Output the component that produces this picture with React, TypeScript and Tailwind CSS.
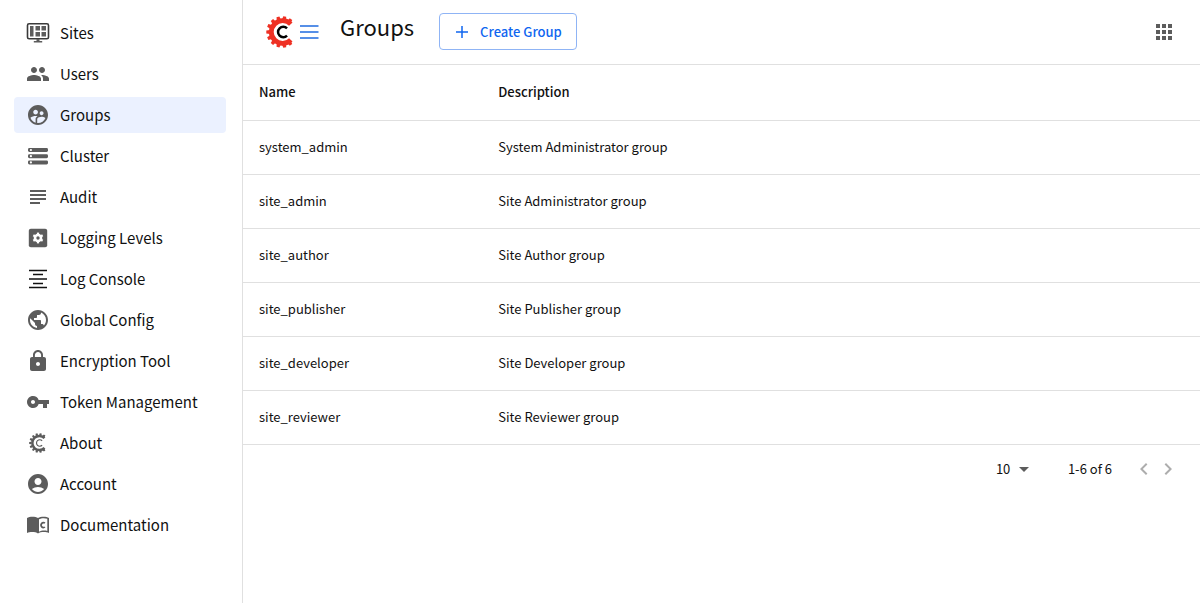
import type { ReactNode } from 'react';
import {
  MdAccountCircle,
  MdApps,
  MdArrowDropDown,
  MdChevronLeft,
  MdChevronRight,
  MdLock,
  MdPeople,
  MdPublic,
  MdSubject,
  MdSupervisedUserCircle,
  MdVpnKey,
} from 'react-icons/md';

const toothAngles = [-125, -100, -75, -50, -25, 0, 25, 50, 75, 100, 125];
const cogAngles = [0, 60, 120, 180, 240, 300];

type GearLogoProps = { className: string; cColor: string; ring: number; stroke: number };

function GearLogo({ className, cColor, ring, stroke }: GearLogoProps) {
  return (
    <svg viewBox="0 0 32 32" className={className} fill="none" aria-hidden="true">
      <path d="M24.8 8.2A11.3 11.3 0 1 0 24.8 23.8" stroke="currentColor" strokeWidth={ring} />
      {toothAngles.map((a) => (
        <path key={a} d="M4 13.9 0.3 14.5V17.5L4 18.1Z" fill="currentColor" transform={`rotate(${a} 16 16)`} />
      ))}
      <path d="M21 12.4A5.2 5.2 0 1 0 21 19.6" stroke={cColor} strokeWidth={stroke} />
    </svg>
  );
}

function SitesIcon() {
  return (
    <svg viewBox="0 0 24 24" className="size-6" fill="none" aria-hidden="true">
      <rect x="1.5" y="2.8" width="21" height="15" rx="1.6" stroke="#3a3a3a" strokeWidth="1.6" />
      <path d="M4 5h3.5v10.500H4zM9.500 5H14v4.500H9.500zM15.500 5H20v4.500h-4.500zM9.500 11H14v4.500H9.500zM15.500 11H20v4.500h-4.500z" fill="currentColor" />
      <path d="M10.5 18h3v2h2.7v1.600H7.800V20h2.700z" fill="currentColor" />
    </svg>
  );
}

function ClusterIcon() {
  return (
    <svg viewBox="0 0 24 24" className="size-6" aria-hidden="true">
      {[4, 10.2, 16.4].map((y) => (
        <g key={y}>
          <rect x="2" y={y} width="20" height="4" rx="1.4" fill="currentColor" />
          <circle cx="4.9" cy={y + 2} r="1.1" fill="#fff" />
        </g>
      ))}
    </svg>
  );
}

function LoggingIcon() {
  return (
    <svg viewBox="0 0 24 24" className="size-6" aria-hidden="true">
      <rect x="2.8" y="2.8" width="18.4" height="18.4" rx="2" fill="currentColor" />
      <circle cx="12" cy="12" r="3" fill="none" stroke="#fff" strokeWidth="2.6" />
      {cogAngles.map((a) => (
        <rect key={a} x="10.900" y="6.6" width="2.2" height="2.4" fill="#fff" transform={`rotate(${a} 12 12)`} />
      ))}
    </svg>
  );
}

function ConsoleIcon() {
  return (
    <svg viewBox="0 0 24 24" className="size-6 text-[#111]" aria-hidden="true">
      <path d="M3 3.500h18M7 7.500h10M3 12h18M7 16.500h10M3 20.500h18" stroke="currentColor" strokeWidth="1.600" />
    </svg>
  );
}

function DocsIcon() {
  return (
    <svg viewBox="0 0 24 24" className="size-6" fill="none" aria-hidden="true">
      <path d="M12 5C9.5 3.600 4 3.300 1 5v15c3-1.400 8.500-1.300 11 .5 2.500-1.800 8-1.900 11-.5V5c-3-1.700-8.500-1.400-11 0Zm9.300 13c-2.500-.8-6.300-.4-8.300.8V6.300c2-1.200 5.800-1.500 8.300-.5Z" fill="currentColor" fillRule="evenodd" />
      <path d="M18.900 10.200A2.300 2.500 0 1 0 18.900 14" stroke="currentColor" strokeWidth="1.700" />
    </svg>
  );
}

const icon = 'size-6';

const navItems: { label: string; icon: ReactNode }[] = [
  { label: 'Sites', icon: <SitesIcon /> },
  { label: 'Users', icon: <MdPeople className={icon} /> },
  { label: 'Groups', icon: <MdSupervisedUserCircle className={icon} /> },
  { label: 'Cluster', icon: <ClusterIcon /> },
  { label: 'Audit', icon: <MdSubject className={icon} /> },
  { label: 'Logging Levels', icon: <LoggingIcon /> },
  { label: 'Log Console', icon: <ConsoleIcon /> },
  { label: 'Global Config', icon: <MdPublic className={icon} /> },
  { label: 'Encryption Tool', icon: <MdLock className={icon} /> },
  { label: 'Token Management', icon: <MdVpnKey className={icon} /> },
  { label: 'About', icon: <GearLogo className="mr-px ml-[3px] size-5" cColor="currentColor" ring={4} stroke={1.8} /> },
  { label: 'Account', icon: <MdAccountCircle className={icon} /> },
  { label: 'Documentation', icon: <DocsIcon /> },
];

const groups = [
  ['system_admin', 'System Administrator group'],
  ['site_admin', 'Site Administrator group'],
  ['site_author', 'Site Author group'],
  ['site_publisher', 'Site Publisher group'],
  ['site_developer', 'Site Developer group'],
  ['site_reviewer', 'Site Reviewer group'],
];

export default function App() {
  return (
    <div className="flex min-h-screen bg-white font-['Noto_Sans_CJK_SC','Noto_Sans',sans-serif] text-[#111]">
      <aside className="w-[243px] shrink-0 border-r border-[#e0e0e0] py-[15px] pr-4 pl-3.5">
        <nav className="flex flex-col gap-[5px]">
          {navItems.map((item) => (
            <a
              key={item.label}
              href="#"
              aria-current={item.label === 'Groups' ? 'page' : undefined}
              className="flex h-9 items-center gap-2.5 rounded px-3 text-[15px] leading-6 aria-[current=page]:bg-[#ebf1ff]"
            >
              <span className="text-[#5c5c5c]">{item.icon}</span>
              {item.label}
            </a>
          ))}
        </nav>
      </aside>

      <main className="min-w-0 grow">
        <header className="flex h-[65px] items-center border-b border-[#e0e0e0] pr-6 pb-px pl-[23px]">
          <button type="button" aria-label="Toggle sidebar" className="flex items-center">
            <GearLogo className="size-8 text-[#ee3124]" cColor="#000" ring={4.8} stroke={2.5} />
            <svg viewBox="0 0 24 24" className="size-6 text-[#1f6be0]" aria-hidden="true">
              <path d="M2 6h18.500M2 12h18.500M2 18h18.500" stroke="currentColor" strokeWidth="1.700" />
            </svg>
          </button>
          <h1 className="ml-[18px] pb-3 text-[22px] leading-8">Groups</h1>
          <button
            type="button"
            className="ml-[25px] flex h-[37px] items-center gap-2.5 rounded border border-[#8fb4f5] px-3.5 text-[13px] leading-6 font-medium text-[#0f66f0]"
          >
            <svg viewBox="0 0 16 16" className="size-4" aria-hidden="true">
              <path d="M8 2v12M2 8h12" stroke="currentColor" strokeWidth="1.500" />
            </svg>
            Create Group
          </button>
          <button type="button" aria-label="Apps" className="ml-auto text-[#5c5c5c]">
            <MdApps className="size-6" />
          </button>
        </header>

        <table className="w-full table-fixed border-collapse text-left text-[13px] leading-5">
          <thead>
            <tr className="h-[55px] border-b border-[#e0e0e0]">
              <th scope="col" className="w-1/4 px-4 font-medium">Name</th>
              <th scope="col" className="px-4 font-medium">Description</th>
            </tr>
          </thead>
          <tbody>
            {groups.map(([name, description]) => (
              <tr key={name} className="h-[54px] border-b border-[#e0e0e0]">
                <td className="px-4">{name}</td>
                <td className="px-4">{description}</td>
              </tr>
            ))}
          </tbody>
        </table>

        <div className="flex h-12 items-center justify-end pr-5 text-[13px] leading-5">
          <label className="relative flex items-center">
            <select aria-label="Rows per page" className="w-9 appearance-none bg-transparent leading-5" defaultValue="10">
              <option>10</option>
            </select>
            <MdArrowDropDown className="pointer-events-none absolute -right-1 size-6 text-[#5c5c5c]" />
          </label>
          <span className="ml-9">1-6 of 6</span>
          <div className="ml-5 flex text-[#adadad]">
            <button type="button" aria-label="Previous page" disabled>
              <MdChevronLeft className="size-6" />
            </button>
            <button type="button" aria-label="Next page" disabled>
              <MdChevronRight className="size-6" />
            </button>
          </div>
        </div>
      </main>
    </div>
  );
}
